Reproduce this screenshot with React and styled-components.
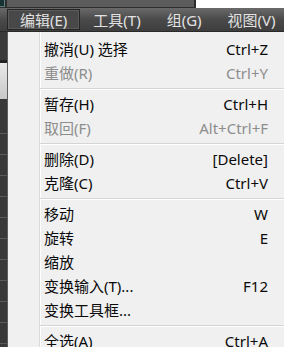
import React from "react";
import styled, { createGlobalStyle } from "styled-components";

const GlobalStyle = createGlobalStyle`
  html, body {
    margin: 0;
    padding: 0;
    background: #3a3a3a;
    overflow: hidden;
  }
  body {
    font-family: "Noto Sans", "Noto Sans CJK SC", sans-serif;
  }
`;

const menuBar = [
  { label: "编辑(E)", active: true },
  { label: "工具(T)" },
  { label: "组(G)" },
  { label: "视图(V)" },
];

const items = [
  { label: "撤消(U) 选择", key: "Ctrl+Z" },
  { label: "重做(R)", key: "Ctrl+Y", disabled: true },
  "sep",
  { label: "暂存(H)", key: "Ctrl+H" },
  { label: "取回(F)", key: "Alt+Ctrl+F", disabled: true },
  "sep",
  { label: "删除(D)", key: "[Delete]" },
  { label: "克隆(C)", key: "Ctrl+V" },
  "sep",
  { label: "移动", key: "W" },
  { label: "旋转", key: "E" },
  { label: "缩放" },
  { label: "变换输入(T)...", key: "F12" },
  { label: "变换工具框..." },
  "sep",
  { label: "全选(A)", key: "Ctrl+A" },
];

export default function App() {
  return (
    <Screen>
      <GlobalStyle />
      <TopStrip>
        <Thumb />
        <GrayPanel />
        <WhitePanel />
      </TopStrip>
      <MenuBar>
        {menuBar.map((m) => (
          <BarItem key={m.label} active={m.active}>
            {m.label}
          </BarItem>
        ))}
      </MenuBar>
      <Body>
        <SideStrip>
          <SideDark />
          <SideRule />
          <SideLight />
          <SideRows />
        </SideStrip>
        <Dropdown>
          {items.map((item, i) =>
            item === "sep" ? (
              <Separator key={`sep_${i}`} />
            ) : (
              <Row key={item.label} disabled={item.disabled}>
                <span>{item.label}</span>
                {item.key && <span>{item.key}</span>}
              </Row>
            )
          )}
        </Dropdown>
      </Body>
    </Screen>
  );
}

const Screen = styled.div`
  width: 284px;
  height: 347px;
  display: flex;
  flex-direction: column;
  overflow: hidden;
`;

const TopStrip = styled.div`
  height: 8px;
  display: flex;
  background: #2e2e2e;
`;

const Thumb = styled.div`
  width: 5px;
  height: 7px;
  box-sizing: border-box;
  background: #163232;
  border: 1px solid #5e7c7c;
  border-left: none;
  border-top: none;
`;

const GrayPanel = styled.div`
  width: 187px;
  margin-left: 2px;
  height: 7px;
  background: #5c5c5c;
  border-right: 2px solid #2c2c2c;
`;

const WhitePanel = styled.div`
  flex: 1;
  height: 8px;
  background: #ffffff;
`;

const MenuBar = styled.div`
  height: 24px;
  display: flex;
  align-items: stretch;
  padding-left: 7px;
  background: linear-gradient(#6a6a6a, #4a4a4a 50%, #3e3e3e);
  border-bottom: 1px solid #2a2a2a;
  box-sizing: border-box;
`;

const BarItem = styled.div`
  display: flex;
  align-items: center;
  margin: 1px 0;
  padding: 0 12px;
  box-sizing: border-box;
  font-size: 15px;
  color: #e2e2e2;
  white-space: nowrap;
  width: 75px;
  ${(p) =>
    p.active
      ? `
    background: #484848;
    border: 1px solid #252525;
    box-shadow: inset 0 0 0 1px #5a5a5a;
  `
      : `
    border: 1px solid transparent;
  `}
  &:nth-child(3) {
    width: 63px;
  }
`;

const Body = styled.div`
  flex: 1;
  display: flex;
  min-height: 0;
`;

const SideStrip = styled.div`
  width: 7px;
  display: flex;
  flex-direction: column;
  background: #3a3a3a;
  border-right: 1px solid #5e5e5e;
`;

const SideDark = styled.div`
  height: 28px;
`;

const SideRule = styled.div`
  height: 3px;
  background: #222222;
`;

const SideLight = styled.div`
  height: 36px;
  background: linear-gradient(#e8e8e8, #c8c8c8);
`;

const SideRows = styled.div`
  flex: 1;
  background: repeating-linear-gradient(
    #383838 0px,
    #383838 20px,
    #5a5a5a 20px,
    #5a5a5a 21px
  );
  background-position: 0 14px;
`;

const Dropdown = styled.div`
  flex: 1;
  padding-top: 5px;
  background-color: #f0f0f0;
  background-image: linear-gradient(
    to right,
    transparent 31px,
    #dadada 31px,
    #dadada 32px,
    #ffffff 32px,
    #ffffff 33px,
    transparent 33px
  );
`;

const Row = styled.div`
  height: 24px;
  display: flex;
  align-items: center;
  justify-content: space-between;
  padding: 0 16px 0 36px;
  font-size: 15px;
  line-height: 24px;
  white-space: nowrap;
  color: ${(p) => (p.disabled ? "#8d8d8d" : "#0a0a0a")};
`;

const Separator = styled.div`
  height: 7px;
  display: flex;
  align-items: center;
  padding-left: 32px;

  &::after {
    content: "";
    flex: 1;
    height: 1px;
    background: #d5d5d5;
    box-shadow: 0 1px 0 #ffffff;
  }
`;
